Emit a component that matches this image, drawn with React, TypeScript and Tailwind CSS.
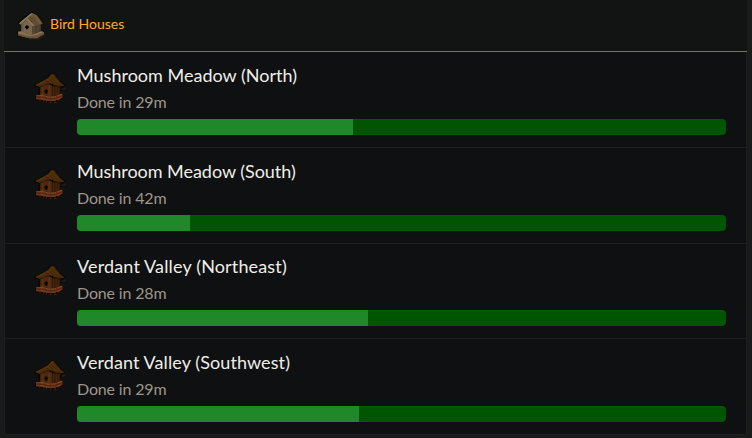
const houses = [
  { name: "Mushroom Meadow (North)", time: "29m", fill: 276, height: "h-24", top: "pt-[11px]", spacing: "tracking-[0.01px]" },
  { name: "Mushroom Meadow (South)", time: "42m", fill: 113, height: "h-24", top: "pt-[11px]", spacing: "tracking-[-0.04px]" },
  { name: "Verdant Valley (Northeast)", time: "28m", fill: 291, height: "h-[95px]", top: "pt-2.5", spacing: "tracking-[0.15px]" },
  { name: "Verdant Valley (Southwest)", time: "29m", fill: 282, height: "h-24", top: "pt-[11px]", spacing: "tracking-[0.09px]" },
];

function StoneHouse() {
  return (
    <svg className="size-8 shrink-0" viewBox="18 18 96 96">
      <path d="M100 57l5 4-7 6v13l9 4v9l-8 6-12 6H60z" fill="#281817" />
      <path d="M24 78l11-3V61l-8-6v-5l18-15 23-15 17 8 12 16 7 14-7 6v12l9 3v9l-8 6-18 9H59l-35-9z" fill="#0b0a08" />
      <path d="M37 58l15-14 19 17v29l-34-8z" fill="#77654c" />
      <path d="M37 58l6-6v31l-6-2z" fill="#655640" />
      <path d="M70 61l25-4v22l-24 11z" fill="#564735" />
      <path d="M79 59h5v24l-5 3zM89 58h4v20l-4 2z" fill="#483b2d" />
      <path d="M51 39l17-16 15 7 11 14 8 13-26 5-9-13z" fill="#614e34" />
      <path d="M58 36l11-11 13 6 16 24-7 3-15-19-10-6z" fill="#705a3b" />
      <path d="M60 38l8 5 10 16M68 31l8 5 12 20" fill="none" stroke="#5b492e" strokeWidth="2" />
      <path d="M30 55l20-17 18-14 2 3-14 13 14 13 7 9-6 2-19-20-18 15z" fill="#8b7554" />
      <path d="M35 52l17-14 14-11" fill="none" stroke="#9a8360" strokeWidth="2" />
      <path d="M27 80l12-2 11 7 20 5 27-12 8 4v6l-21 12H60l-33-9z" fill="#806b4e" />
      <path d="M27 86l32 7h16l30-11v6l-21 12H60l-33-9z" fill="#675439" />
      <path d="M28 81l31 9h14l27-9" fill="none" stroke="#8c7554" strokeWidth="3" />
      <path d="M51 61h5l1 3h3v5h-3l-1 4h-5v-4h-3v-5h3z" fill="#080907" />
    </svg>
  );
}

function WoodHouse() {
  return (
    <svg className="mt-[21px] size-8 shrink-0" viewBox="26 25 93 93">
      <path d="M106 65h9l4 4-5 5h-7zM102 79l9 5-1 8-5 8-9 5zM61 104h12l4 9-6-3zM81 105h9l2 10-4 1zM43 102h8l5 8-5 1z" fill="#2a1915" />
      <path d="M27 60l18-10 17-10 12-13h10l11 13 10 12 12 7v6l-13 5v18l4 3v8l-6 4-2 6-4-4-6 2-2 7-7-7-5 8-6-8-6 5-7-5-6 3-7-4-9 1-6-5v-11h10V67l-11-1z" fill="#090502" />
      <path d="M44 65l20-10 15 8v31l-35-5z" fill="#4c280e" />
      <path d="M49 65h5v24h-5zM67 60h6v31h-6z" fill="#5a3112" />
      <path d="M79 63l23 2v23l-23 7z" fill="#351b09" />
      <path d="M81 66h3v26h-3zM89 66h3v24h-3zM97 67h2v19h-2z" fill="#4d290e" />
      <path d="M30 60l24-13 12-7 11-12h6l11 14 11 13 11 6-14 3-15-3-8-5H64L43 66z" fill="#4a2c09" />
      <path d="M31 60l23-12 13-8 11-11 4 1-12 15-18 9-17 9z" fill="#57350c" />
      <path d="M66 43l14 12M71 39l18 16M78 34l20 22" fill="none" stroke="#5d3a0d" strokeWidth="2" />
      <path d="M60 46l15 10M68 40l16 16M75 36l18 19" fill="none" stroke="#382006" strokeWidth="2" />
      <path d="M42 66l21-9h12l11 6h18" fill="none" stroke="#241303" strokeWidth="2" />
      <path d="M59 73h5v3h3v5h-3v4h-5v-4h-3v-5h3z" fill="#090604" />
      <path d="M32 90l18-2 18 5h19l17-8 5 3v8l-9 6-17 4H63l-22-4h-9z" fill="#6a351a" />
      <path d="M33 91l16-1 18 5h19l21-8" fill="none" stroke="#824526" strokeWidth="3" />
      <path d="M34 95l17 1 16 4h19l21-8" fill="none" stroke="#3d1d0c" strokeWidth="2" />
      <path d="M35 99l16 1 14 4h21l18-6" fill="none" stroke="#784020" strokeWidth="3" />
      <path d="M43 102v5M53 104l1 4M62 105v6M75 105v9M87 104v8M98 101v6" fill="none" stroke="#572b10" strokeWidth="3" />
      <path d="M40 91v9M58 91v10M74 94v10M92 92v9" fill="none" stroke="#53280f" strokeWidth="2" />
    </svg>
  );
}

export default function App() {
  return (
    <main className="h-[438px] w-[752px] overflow-hidden bg-[#191a1a] pl-1 font-['Lato',sans-serif]">
      <header className="flex h-[52px] w-[743px] items-start border-b border-[#767264] bg-[#111412] pl-[11px]">
        <div className="mt-[11px]"><StoneHouse /></div>
        <h1 className="mt-3.5 ml-[3px] text-[14px] leading-5 text-[#ffaa2b]">Bird Houses</h1>
      </header>
      <section className="w-[743px] overflow-hidden rounded-b border-x border-[#1d1f1e] bg-[#0e1012]">
        {houses.map((house) => (
          <article key={house.name} className={`flex border-b border-[#1d1f20] pl-[29px] ${house.height}`}>
            <WoodHouse />
            <div className={`ml-[11px] w-[649px] ${house.top}`}>
              <h2 className={`text-[18px] leading-6 text-[#f0eee7] ${house.spacing}`}>{house.name}</h2>
              <p className="mt-[3px] text-[16px] leading-6 tracking-[-0.16px] text-[#9f9788]">Done in {house.time}</p>
              <div className="mt-[5px] h-4 overflow-hidden rounded bg-[#005600]">
                <div className="h-full bg-[#1f8828]" style={{ width: house.fill }} />
              </div>
            </div>
          </article>
        ))}
      </section>
    </main>
  );
}
